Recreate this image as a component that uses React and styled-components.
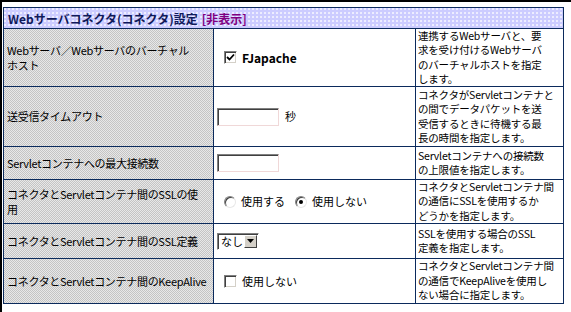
import styled, { createGlobalStyle } from "styled-components";

const GlobalStyle = createGlobalStyle`
  html, body {
    margin: 0;
    background: #ffffff;
  }
  body {
    font-family: "Noto Sans CJK JP", sans-serif;
    font-size: 11px;
    color: #000000;
  }
`;

const rows = [
  {
    height: 57,
    label: ["Webサーバ／Webサーバのバーチャル", "ホスト"],
    control: "host",
    note: ["連携するWebサーバと、要", "求を受け付けるWebサーバ", "のバーチャルホストを指定", "します。"],
  },
  {
    height: 59,
    label: ["送受信タイムアウト"],
    control: "timeout",
    note: ["コネクタがServletコンテナと", "の間でデータパケットを送", "受信するときに待機する最", "長の時間を指定します。"],
  },
  {
    height: 32,
    label: ["Servletコンテナへの最大接続数"],
    control: "max",
    note: ["Servletコンテナへの接続数", "の上限値を指定します。"],
  },
  {
    height: 43,
    label: ["コネクタとServletコンテナ間のSSLの使", "用"],
    control: "ssl",
    note: ["コネクタとServletコンテナ間", "の通信にSSLを使用するか", "どうかを指定します。"],
  },
  {
    height: 34,
    label: ["コネクタとServletコンテナ間のSSL定義"],
    control: "ssldef",
    note: ["SSLを使用する場合のSSL", "定義を指定します。"],
  },
  {
    height: 44,
    label: ["コネクタとServletコンテナ間のKeepAlive"],
    control: "keepalive",
    note: ["コネクタとServletコンテナ間", "の通信でKeepAliveを使用し", "ない場合に指定します。"],
  },
];

function Lines({ lines }) {
  return lines.map((line, i) => (
    <span key={i}>
      {line}
      {i < lines.length - 1 && <br />}
    </span>
  ));
}

function CheckBox({ checked }) {
  return (
    <Box>
      {checked && (
        <svg width="9" height="9" viewBox="0 0 9 9">
          <path d="M1 4 L3.5 6.5 L8 1.5" fill="none" stroke="#000" strokeWidth="1.8" />
        </svg>
      )}
    </Box>
  );
}

function Control({ kind }) {
  if (kind === "host") {
    return (
      <Choice>
        <CheckBox checked />
        <Bold>FJapache</Bold>
      </Choice>
    );
  }
  if (kind === "timeout") {
    return (
      <Field>
        <TextInput />
        <span>秒</span>
      </Field>
    );
  }
  if (kind === "max") {
    return (
      <Field>
        <TextInput />
      </Field>
    );
  }
  if (kind === "ssl") {
    return (
      <Choice>
        <Radio />
        <OptionText>使用する</OptionText>
        <Radio checked />
        <span>使用しない</span>
      </Choice>
    );
  }
  if (kind === "ssldef") {
    return (
      <Field>
        <Select>
          <span>なし</span>
          <DropButton>
            <svg width="7" height="4" viewBox="0 0 7 4">
              <path d="M0 0 H7 L3.5 4 Z" fill="#000" />
            </svg>
          </DropButton>
        </Select>
      </Field>
    );
  }
  return (
    <Choice>
      <CheckBox />
      <span>使用しない</span>
    </Choice>
  );
}

export default function App() {
  return (
    <>
      <GlobalStyle />
      <Frame>
        <Grid rows={rows.map((r) => r.height)}>
          <Title>
            Webサーバコネクタ(コネクタ)設定 <Hidden>[非表示]</Hidden>
          </Title>
          {rows.map((row, i) => [
            <LabelCell key={`l${i}`}>
              <div>
                <Lines lines={row.label} />
              </div>
            </LabelCell>,
            <ValueCell key={`v${i}`}>
              <Control kind={row.control} />
            </ValueCell>,
            <NoteCell key={`n${i}`}>
              <div>
                <Lines lines={row.note} />
              </div>
            </NoteCell>,
          ])}
        </Grid>
      </Frame>
    </>
  );
}

const Frame = styled.div`
  width: 571px;
  height: 312px;
  box-sizing: border-box;
  border-top: 2px solid #000000;
  border-left: 2px solid #000000;
  padding: 5px 0 0 1px;
`;

const Grid = styled.div`
  display: grid;
  width: 561px;
  box-sizing: border-box;
  grid-template-columns: 209px 201px 147px;
  grid-template-rows: 20px ${(props) => props.rows.map((h) => `${h}px`).join(" ")};
  gap: 1px;
  padding: 1px;
  background: #0b2a5c;
`;

const Title = styled.div`
  grid-column: 1 / -1;
  display: flex;
  align-items: center;
  gap: 4px;
  padding-left: 4px;
  font-size: 12px;
  font-weight: bold;
  color: #101a5a;
  white-space: nowrap;
  background-color: #ccccff;
  background-image: radial-gradient(circle at 1px 1px, #ffffff 0.6px, transparent 0.9px);
  background-size: 4px 4px;
`;

const Hidden = styled.span`
  color: #800080;
`;

const Cell = styled.div`
  display: flex;
  align-items: center;
  line-height: 15px;
  white-space: nowrap;
  overflow: hidden;
`;

const LabelCell = styled(Cell)`
  padding-left: 3px;
  letter-spacing: -0.3px;
  background-color: #d6d6d6;
  background-image: conic-gradient(#c4c4c4 25%, #e8e8e8 0 50%, #c4c4c4 0 75%, #e8e8e8 0);
  background-size: 2px 2px;
`;

const ValueCell = styled(Cell)`
  background: #ffffff;
`;

const NoteCell = styled(Cell)`
  padding-left: 2px;
  font-size: 10.5px;
  line-height: 14.5px;
  letter-spacing: -0.2px;
  background: #ffffff;
`;

const Choice = styled.div`
  display: flex;
  align-items: center;
  gap: 5px;
  padding-left: 10px;
`;

const OptionText = styled.span`
  margin-right: 5px;
`;

const Field = styled.div`
  display: flex;
  align-items: center;
  gap: 6px;
  padding-left: 3px;
`;

const Bold = styled.span`
  font-size: 12px;
  font-weight: bold;
`;

const Box = styled.span`
  width: 13px;
  height: 13px;
  box-sizing: border-box;
  display: inline-flex;
  align-items: center;
  justify-content: center;
  background: #ffffff;
  border: 1px solid;
  border-color: #808080 #ffffff #ffffff #808080;
  box-shadow: inset 1px 1px #404040, inset -1px -1px #d4d0c8;
`;

const Radio = styled.span`
  position: relative;
  width: 12px;
  height: 12px;
  box-sizing: border-box;
  border-radius: 50%;
  background: #ffffff;
  border: 1px solid;
  border-color: #808080 #e8e8e8 #e8e8e8 #808080;
  box-shadow: inset 1px 1px #404040;

  &::after {
    content: "";
    display: ${(props) => (props.checked ? "block" : "none")};
    position: absolute;
    left: 3px;
    top: 3px;
    width: 4px;
    height: 4px;
    border-radius: 50%;
    background: #000000;
  }
`;

const TextInput = styled.input`
  width: 62px;
  height: 18px;
  box-sizing: border-box;
  margin: 0;
  border: 1px solid;
  border-color: #808080 #f0d8d8 #f0d8d8 #808080;
  box-shadow: inset 1px 1px #404040;
  background: #ffffff;
  font: inherit;
`;

const Select = styled.span`
  display: inline-flex;
  align-items: center;
  justify-content: space-between;
  width: 42px;
  height: 17px;
  box-sizing: border-box;
  padding: 1px 1px 1px 3px;
  border: 1px solid;
  border-color: #808080 #ffffff #ffffff #808080;
  box-shadow: inset 1px 1px #404040;
  background: #ffffff;
`;

const DropButton = styled.span`
  display: inline-flex;
  align-items: center;
  justify-content: center;
  width: 13px;
  height: 13px;
  box-sizing: border-box;
  background: #d4d0c8;
  border: 1px solid;
  border-color: #ffffff #404040 #404040 #ffffff;
`;
